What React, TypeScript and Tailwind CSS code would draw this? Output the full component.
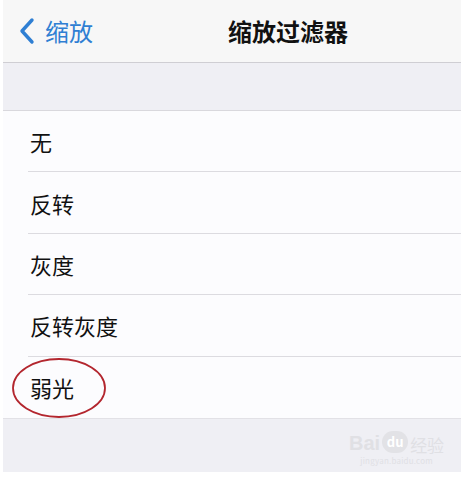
import React from "react"

const rows = ["无", "反转", "灰度", "反转灰度", "弱光"]

export default function App() {
  return (
    <div
      className="w-[461px] h-[478px] bg-white pl-[3px] pb-[6px] flex flex-col overflow-hidden"
      style={{ fontFamily: '"Noto Sans CJK SC", "Noto Sans", sans-serif' }}
    >
      {/* nav bar */}
      <div className="relative h-[63px] shrink-0 bg-[#f7f7f7] border-b border-[#cfced3] flex items-center">
        <div className="flex items-center pl-[14px] text-[#2f7fd3]">
          <svg width="20" height="28" viewBox="0 0 20 28" fill="none">
            <path d="M15 3 L5 14 L15 25" stroke="currentColor" strokeWidth="3.4" strokeLinecap="round" strokeLinejoin="round" />
          </svg>
          <span className="ml-[8px] text-[24px] leading-none">缩放</span>
        </div>
        <div className="absolute left-[225px] top-0 h-full flex items-center text-[24px] font-semibold text-[#111] leading-none">
          缩放过滤器
        </div>
      </div>

      {/* section header */}
      <div className="h-[48px] shrink-0 bg-[#efeff4] border-b border-[#d9d8dd]" />

      {/* list */}
      <div className="relative bg-[#fcfcfe]">
        {rows.map((r, i) => (
          <div key={r} className="pl-[25px] h-[61.4px] flex flex-col">
            <div className="flex-1 flex items-center pl-[2px] text-[22px] text-[#111] leading-none">{r}</div>
            {i < rows.length - 1 && <div className="h-px bg-[#dcdbe0]" />}
          </div>
        ))}
        <svg className="absolute left-[6px] top-[245px]" width="100" height="64" viewBox="0 0 100 64">
          <ellipse cx="50" cy="32" rx="46" ry="29" fill="none" stroke="#b3262e" strokeWidth="1.8" />
        </svg>
      </div>

      {/* bottom band */}
      <div className="flex-1 bg-[#efeff4] border-t border-[#e2e1e6] relative">
        <div className="absolute left-[346px] top-[12px] flex flex-col items-center text-[#e0e0e4]">
          <div className="flex items-end leading-none">
            <span className="text-[20px] font-bold" style={{ fontFamily: '"Liberation Sans", sans-serif' }}>Bai</span>
            <span className="mx-[2px] w-[26px] h-[22px] rounded-full bg-[#e2e2e6] text-white text-[13px] font-bold flex items-center justify-center">du</span>
            <span className="text-[17px]">经验</span>
          </div>
          <span className="text-[8px] tracking-wide mt-[2px]">jingyan.baidu.com</span>
        </div>
      </div>
    </div>
  )
}
